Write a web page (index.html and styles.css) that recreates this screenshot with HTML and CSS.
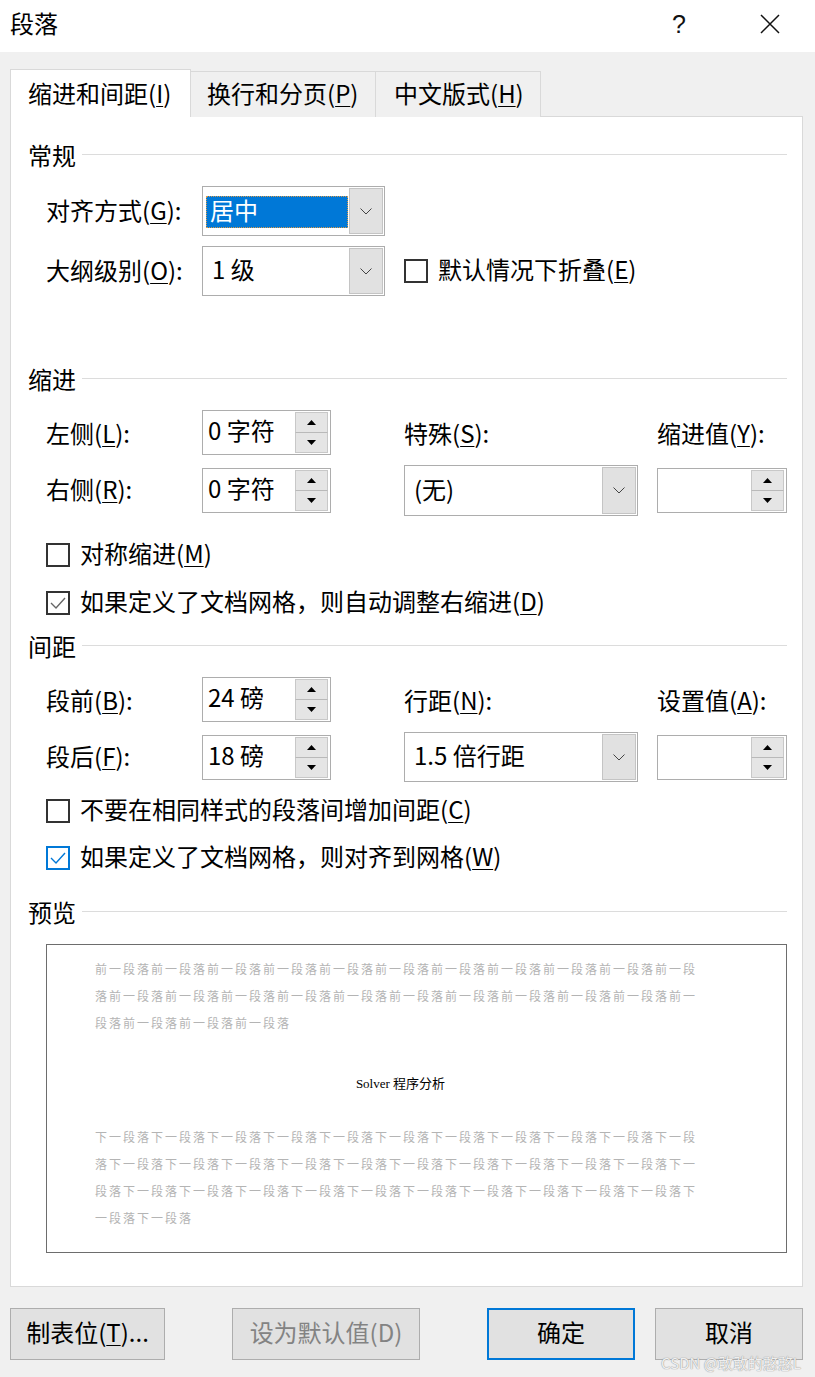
FILE: index.html
```html
<!DOCTYPE html>
<html lang="zh-CN">
<head>
<meta charset="utf-8">
<title>段落</title>
<link rel="stylesheet" href="styles.css">
</head>
<body>
<div class="titlebar">
  <div class="title">段落</div>
  <div class="tb-btn tb-help">?</div>
  <div class="tb-btn tb-close"><svg width="20" height="20" viewBox="0 0 20 20"><path d="M1 1L19 19M19 1L1 19" stroke="#111" stroke-width="1.5" fill="none"/></svg></div>
</div>

<div class="tabs">
  <div class="tab active t1">缩进和间距(<u>I</u>)</div>
  <div class="tab t2">换行和分页(<u>P</u>)</div>
  <div class="tab t3">中文版式(<u>H</u>)</div>
</div>

<div class="panel">
  <div class="section s-general"><span>常规</span><i class="rule"></i></div>

  <div class="row h50 r-align">
    <div class="lbl">对齐方式(<u>G</u>):</div>
    <div class="combo w183">
      <div class="cv cv-sel"><span class="sel">居中</span></div>
      <div class="dd"><svg width="12" height="7" viewBox="0 0 12 7"><polyline points="0.5,0.5 6,6 11.5,0.5" fill="none" stroke="#444" stroke-width="1"/></svg></div>
    </div>
  </div>

  <div class="row h50 r-outline">
    <div class="lbl">大纲级别(<u>O</u>):</div>
    <div class="combo w183">
      <div class="cv">1 级</div>
      <div class="dd"><svg width="12" height="7" viewBox="0 0 12 7"><polyline points="0.5,0.5 6,6 11.5,0.5" fill="none" stroke="#444" stroke-width="1"/></svg></div>
    </div>
    <div class="check span2"><span class="box"></span><span>默认情况下折叠(<u>E</u>)</span></div>
  </div>

  <div class="section s-indent"><span>缩进</span><i class="rule"></i></div>

  <div class="row h45 r-left">
    <div class="lbl">左侧(<u>L</u>):</div>
    <div class="spin w129">
      <div class="sv">0 字符</div>
      <div class="sb"><span class="up"><svg width="9" height="5" viewBox="0 0 9 5"><polygon points="0,5 4.5,0 9,5" fill="#000"/></svg></span><span class="dn"><svg width="9" height="5" viewBox="0 0 9 5"><polygon points="0,0 4.5,5 9,0" fill="#000"/></svg></span></div>
    </div>
    <div class="lbl">特殊(<u>S</u>):</div>
    <div class="lbl">缩进值(<u>Y</u>):</div>
  </div>

  <div class="row h51 r-right">
    <div class="lbl">右侧(<u>R</u>):</div>
    <div class="spin w129">
      <div class="sv">0 字符</div>
      <div class="sb"><span class="up"><svg width="9" height="5" viewBox="0 0 9 5"><polygon points="0,5 4.5,0 9,5" fill="#000"/></svg></span><span class="dn"><svg width="9" height="5" viewBox="0 0 9 5"><polygon points="0,0 4.5,5 9,0" fill="#000"/></svg></span></div>
    </div>
    <div class="combo w234 h51c">
      <div class="cv">(无)</div>
      <div class="dd"><svg width="12" height="7" viewBox="0 0 12 7"><polyline points="0.5,0.5 6,6 11.5,0.5" fill="none" stroke="#444" stroke-width="1"/></svg></div>
    </div>
    <div class="spin w130">
      <div class="sv"></div>
      <div class="sb"><span class="up"><svg width="9" height="5" viewBox="0 0 9 5"><polygon points="0,5 4.5,0 9,5" fill="#000"/></svg></span><span class="dn"><svg width="9" height="5" viewBox="0 0 9 5"><polygon points="0,0 4.5,5 9,0" fill="#000"/></svg></span></div>
    </div>
  </div>

  <div class="check crow c-mirror"><span class="box"></span><span>对称缩进(<u>M</u>)</span></div>
  <div class="check crow c-grid1"><span class="box checked"><svg width="20" height="20" viewBox="0 0 20 20"><polyline points="3,10 8,15 17,5" fill="none" stroke="#666" stroke-width="1.4"/></svg></span><span>如果定义了文档网格，则自动调整右缩进(<u>D</u>)</span></div>

  <div class="section s-spacing"><span>间距</span><i class="rule"></i></div>

  <div class="row h45 r-before">
    <div class="lbl">段前(<u>B</u>):</div>
    <div class="spin w129">
      <div class="sv">24 磅</div>
      <div class="sb"><span class="up"><svg width="9" height="5" viewBox="0 0 9 5"><polygon points="0,5 4.5,0 9,5" fill="#000"/></svg></span><span class="dn"><svg width="9" height="5" viewBox="0 0 9 5"><polygon points="0,0 4.5,5 9,0" fill="#000"/></svg></span></div>
    </div>
    <div class="lbl">行距(<u>N</u>):</div>
    <div class="lbl">设置值(<u>A</u>):</div>
  </div>

  <div class="row h50 r-after">
    <div class="lbl">段后(<u>F</u>):</div>
    <div class="spin w129">
      <div class="sv">18 磅</div>
      <div class="sb"><span class="up"><svg width="9" height="5" viewBox="0 0 9 5"><polygon points="0,5 4.5,0 9,5" fill="#000"/></svg></span><span class="dn"><svg width="9" height="5" viewBox="0 0 9 5"><polygon points="0,0 4.5,5 9,0" fill="#000"/></svg></span></div>
    </div>
    <div class="combo w234">
      <div class="cv">1.5 倍行距</div>
      <div class="dd"><svg width="12" height="7" viewBox="0 0 12 7"><polyline points="0.5,0.5 6,6 11.5,0.5" fill="none" stroke="#444" stroke-width="1"/></svg></div>
    </div>
    <div class="spin w130">
      <div class="sv"></div>
      <div class="sb"><span class="up"><svg width="9" height="5" viewBox="0 0 9 5"><polygon points="0,5 4.5,0 9,5" fill="#000"/></svg></span><span class="dn"><svg width="9" height="5" viewBox="0 0 9 5"><polygon points="0,0 4.5,5 9,0" fill="#000"/></svg></span></div>
    </div>
  </div>

  <div class="check crow c-nospace"><span class="box"></span><span>不要在相同样式的段落间增加间距(<u>C</u>)</span></div>
  <div class="check crow c-grid2"><span class="box checked focus"><svg width="20" height="20" viewBox="0 0 20 20"><polyline points="3,10 8,15 17,5" fill="none" stroke="#0078d7" stroke-width="1.4"/></svg></span><span>如果定义了文档网格，则对齐到网格(<u>W</u>)</span></div>

  <div class="section s-preview"><span>预览</span><i class="rule"></i></div>

  <div class="preview">
    <p class="pv-gray">前一段落前一段落前一段落前一段落前一段落前一段落前一段落前一段落前一段落前一段落前一段落前一段落前一段落前一段落前一段落前一段落前一段落前一段落前一段落前一段落前一段落前一段落前一段落前一段落前一段落</p>
    <p class="pv-main">Solver 程序分析</p>
    <p class="pv-gray pv-next">下一段落下一段落下一段落下一段落下一段落下一段落下一段落下一段落下一段落下一段落下一段落下一段落下一段落下一段落下一段落下一段落下一段落下一段落下一段落下一段落下一段落下一段落下一段落下一段落下一段落下一段落下一段落下一段落下一段落下一段落下一段落下一段落下一段落下一段落</p>
  </div>
</div>

<div class="buttons">
  <div class="btn b-tabs">制表位(<u>T</u>)...</div>
  <div class="btn b-default disabled">设为默认值(D)</div>
  <div class="btn b-ok">确定</div>
  <div class="btn b-cancel">取消</div>
</div>

<div class="watermark">CSDN @敢敢的憨憨L</div>
</body>
</html>
```

FILE: styles.css
```css
* { box-sizing: border-box; margin: 0; padding: 0; }

body {
  width: 815px;
  height: 1377px;
  background: #f0f0f0;
  font-family: "Noto Sans CJK SC", "Microsoft YaHei", sans-serif;
  font-size: 24px;
  line-height: 1.2;
  color: #000;
  position: relative;
  overflow: hidden;
}

u { text-decoration: underline; text-decoration-thickness: 1px; text-underline-offset: 3px; }

/* title bar */
.titlebar {
  height: 52px;
  background: #fff;
  display: flex;
  align-items: center;
}
.title { padding-left: 10px; padding-bottom: 5px; flex: 1; }
.tb-btn { width: 46px; display: flex; justify-content: center; align-items: center; height: 40px; }
.tb-help { font-family: "Liberation Sans", "DejaVu Sans", sans-serif; font-size: 25px; font-weight: 300; color: #111; padding-bottom: 4px; }
.tb-close { margin-left: 45px; margin-right: 22px; padding-bottom: 4px; }

/* tabs */
.tabs {
  display: flex;
  align-items: flex-end;
  height: 48px;
  margin-top: 17px;
  margin-bottom: -1px;
  padding-left: 10px;
}
.tab {
  height: 46px;
  border: 1px solid #d9d9d9;
  border-bottom: none;
  background: #f0f0f0;
  display: flex;
  align-items: center;
  padding-bottom: 2px;
  margin-left: -1px;
}
.tab.t1 { margin-left: 0; }
.tab.active {
  height: 48px;
  background: #fff;
  position: relative;
  z-index: 1;
  padding-bottom: 0;
}
.t1 { width: 181px; padding-left: 17px; }
.t2 { width: 186px; padding-left: 16px; }
.t3 { width: 166px; padding-left: 18px; }

/* panel */
.panel {
  margin-left: 10px;
  width: 793px;
  height: 1171px;
  background: #fff;
  border: 1px solid #d9d9d9;
}

.section {
  height: 30px;
  display: flex;
  align-items: center;
  padding-left: 17px;
  padding-right: 15px;
  gap: 6px;
}
.section span { padding-bottom: 2px; }
.section .rule { flex: 1; height: 1px; background: #dcdcdc; margin-top: -3px; }

.s-general { margin-top: 24px; }
.s-indent { margin-top: 69px; }
.s-spacing { margin-top: 11px; }
.s-preview { margin-top: 22px; }

.row {
  display: grid;
  grid-template-columns: 156px 202px 253px 130px;
  align-items: center;
  margin-left: 35px;
}
.h45 { height: 45px; }
.h50 { height: 50px; }
.h51 { height: 51px; }
.r-align { margin-top: 15px; }
.r-outline { margin-top: 10px; }
.r-left { margin-top: 15px; }
.r-right { margin-top: 10px; }
.r-before { margin-top: 15px; }
.r-after { margin-top: 10px; }
.r-left .lbl, .r-before .lbl { padding-top: 4px; }

.lbl { white-space: nowrap; padding-bottom: 2px; }

/* combobox */
.combo {
  height: 50px;
  border: 1px solid #adadad;
  background: #fff;
  display: flex;
  padding: 1px;
}
.combo.h51c { height: 51px; }
.w183 { width: 183px; }
.w234 { width: 234px; }
.cv {
  flex: 1;
  display: flex;
  align-items: center;
  padding-left: 8px;
  padding-bottom: 3px;
  white-space: nowrap;
}
.cv-sel { padding: 8px 1px 7px 2px; }
.sel {
  flex: 1;
  height: 32px;
  background: #0078d7;
  color: #fff;
  display: flex;
  align-items: center;
  padding-left: 3px;
  padding-bottom: 2px;
  border: 1px dotted #d99a4a;
}
.dd {
  width: 34px;
  background: #e1e1e1;
  border: 1px solid #c4c4c4;
  display: flex;
  align-items: center;
  justify-content: center;
}

/* spinner */
.spin {
  height: 45px;
  border: 1px solid #adadad;
  background: #fff;
  display: flex;
  padding: 1px;
}
.w129 { width: 129px; }
.w130 { width: 130px; }
.sv {
  flex: 1;
  display: flex;
  align-items: center;
  padding-left: 4px;
  padding-bottom: 4px;
  white-space: nowrap;
}
.sb {
  width: 33px;
  display: flex;
  flex-direction: column;
  margin-right: 1px;
}
.sb span {
  flex: 1;
  background: #e5e5e5;
  border: 1px solid #c8c8c8;
  display: flex;
  align-items: center;
  justify-content: center;
}
.sb .dn { border-top: 1px solid #b9b9b9; margin-top: -1px; }

/* checkbox */
.check {
  display: flex;
  align-items: center;
  gap: 10px;
  white-space: nowrap;
}
.check > span:last-child { padding-bottom: 3px; }
.crow { margin-left: 35px; height: 36px; }
.span2 { grid-column: 3 / span 2; }
.box {
  width: 24px;
  height: 24px;
  border: 2px solid #333;
  background: #fff;
  display: flex;
  align-items: center;
  justify-content: center;
  flex: none;
}
.box.focus { border-color: #0078d7; }
.c-mirror { margin-top: 21px; }
.c-grid1 { margin-top: 12px; }
.c-nospace { margin-top: 11px; }
.c-grid2 { margin-top: 11px; }

/* preview */
.preview {
  margin-top: 16px;
  margin-left: 35px;
  width: 741px;
  height: 309px;
  border: 1px solid #6d6d6d;
  background: #fff;
  padding: 10px 0 0 48px;
}
.pv-gray {
  width: 603px;
  font-size: 12px;
  letter-spacing: 2px;
  line-height: 27px;
  color: #b4b4b4;
  line-break: anywhere;
}
.pv-main {
  width: 611px;
  margin-top: 34px;
  text-align: center;
  font-family: "Liberation Serif", "Noto Sans CJK SC", serif;
  font-size: 13px;
  line-height: 27px;
  color: #000;
}
.pv-next { margin-top: 26px; }

/* buttons */
.buttons {
  display: flex;
  margin-top: 21px;
  padding-left: 10px;
  height: 52px;
}
.btn {
  height: 52px;
  background: #e1e1e1;
  border: 1px solid #adadad;
  display: flex;
  align-items: center;
  justify-content: center;
  padding-bottom: 3px;
  white-space: nowrap;
}
.b-tabs { width: 155px; }
.b-default { width: 188px; margin-left: 67px; color: #838383; }
.b-ok { width: 148px; margin-left: 67px; border: 2px solid #0078d7; }
.b-cancel { width: 148px; margin-left: 20px; }

.watermark {
  position: absolute;
  right: 14px;
  bottom: 5px;
  font-size: 15px;
  color: rgba(255, 255, 255, 0.85);
  text-shadow: 0 0 1px #9a9a9a, 0 0 1px #9a9a9a;
  white-space: nowrap;
}
```
